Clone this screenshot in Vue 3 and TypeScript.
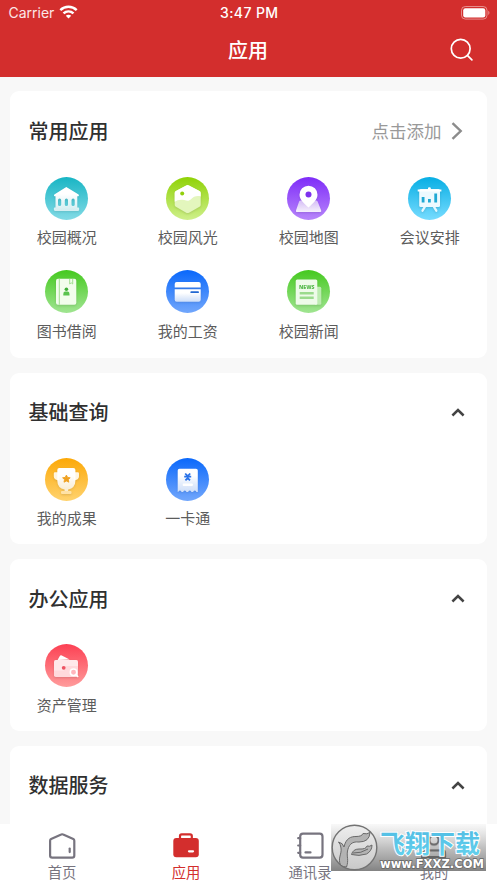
<script setup lang="ts">
interface AppItem {
  icon: string
  label: string
}

interface Section {
  title: string
  addable?: boolean
  items: AppItem[]
}

interface Tab {
  icon: string
  label: string
  active?: boolean
}

const sections: Section[] = [
  {
    title: '常用应用',
    addable: true,
    items: [
      { icon: 'campus', label: '校园概况' },
      { icon: 'scenery', label: '校园风光' },
      { icon: 'map', label: '校园地图' },
      { icon: 'meeting', label: '会议安排' },
      { icon: 'book', label: '图书借阅' },
      { icon: 'salary', label: '我的工资' },
      { icon: 'news', label: '校园新闻' },
    ],
  },
  {
    title: '基础查询',
    items: [
      { icon: 'trophy', label: '我的成果' },
      { icon: 'ticket', label: '一卡通' },
    ],
  },
  { title: '办公应用', items: [{ icon: 'asset', label: '资产管理' }] },
  { title: '数据服务', items: [] },
]

const tabs: Tab[] = [
  { icon: 'home', label: '首页' },
  { icon: 'apps', label: '应用', active: true },
  { icon: 'contacts', label: '通讯录' },
  { icon: 'me', label: '我的' },
]
</script>

<template>
  <div class="screen">
    <svg class="defs" width="0" height="0">
      <defs>
        <linearGradient id="fade" x1="0" y1="0" x2="0" y2="1">
          <stop offset="0.3" stop-color="#fff" />
          <stop offset="1" stop-color="#fff" stop-opacity="0.72" />
        </linearGradient>
        <linearGradient id="haze" x1="0" y1="0" x2="0" y2="1">
          <stop offset="0" stop-color="#fff" stop-opacity="0.6" />
          <stop offset="1" stop-color="#fff" stop-opacity="0.9" />
        </linearGradient>
      </defs>
    </svg>

    <header class="header">
      <div class="status">
        <div class="carrier">
          <span>Carrier</span>
          <svg width="19" height="14" viewBox="0 0 19 14" fill="none" stroke="#fff" stroke-width="2.5">
            <path d="M1.3 5.1C6 0.7 13 0.7 17.7 5.1" />
            <path d="M4.5 8.4c2.9-2.7 7.1-2.7 10 0" />
            <path d="M9.5 13.4L6.8 10.8c1.5-1.5 3.9-1.5 5.4 0z" fill="#fff" stroke="none" />
          </svg>
        </div>
        <div class="clock">3:47 PM</div>
        <div class="battery">
          <svg width="29" height="14" viewBox="0 0 29 14">
            <rect x="0.5" y="0.5" width="25.5" height="12.6" rx="3.8" fill="none" stroke="#fff" stroke-opacity="0.45" />
            <rect x="2.2" y="2.2" width="22.1" height="9.2" rx="2.2" fill="#fff" />
            <path d="M27.3 4.7v4.2c1.5-.6 1.5-3.6 0-4.2z" fill="#fff" fill-opacity="0.5" />
          </svg>
        </div>
      </div>
      <div class="navbar">
        <h1>应用</h1>
        <svg class="search" width="24" height="24" viewBox="0 0 24 24" fill="none" stroke="#fff" stroke-width="1.7" stroke-linecap="round">
          <circle cx="10.7" cy="10.8" r="9.4" />
          <path d="M17.6 17.6l4.3 4.2" />
        </svg>
      </div>
    </header>

    <main class="content">
      <section v-for="section in sections" :key="section.title" class="card">
        <div class="card-head">
          <h2>{{ section.title }}</h2>
          <div v-if="section.addable" class="add">
            <span>点击添加</span>
            <svg width="12" height="18" viewBox="0 0 12 18" fill="none" stroke="#8c8c8c" stroke-width="2.4">
              <path d="M1.5 1.2L9.7 9l-8.2 7.8" />
            </svg>
          </div>
          <svg v-else class="caret" width="14" height="9" viewBox="0 0 14 9" fill="none" stroke="#444" stroke-width="2.5">
            <path d="M1.4 7.5L7 2l5.6 5.5" />
          </svg>
        </div>
        <div v-if="section.items.length" class="grid">
          <div v-for="item in section.items" :key="item.label" class="item">
            <div class="disc" :class="item.icon">
              <svg width="43" height="43" viewBox="0 0 43 43">
                <g v-if="item.icon === 'campus'" fill="url(#fade)">
                  <path fill-rule="evenodd" d="M21.3 10L9.3 17.4Q8.3 19.3 10.5 19.3V30.6H9.8Q8.8 30.6 8.8 32t1 1.9H33.2Q34.2 33.9 34.2 32t-1-1.4H32.3V19.3Q34.6 19.3 33.6 17.4ZM13 23.2a1.6 1.6 0 0 1 3.2 0v4.2a1.6 1.6 0 0 1-3.2 0ZM19.8 23.2a1.6 1.6 0 0 1 3.2 0v4.2a1.6 1.6 0 0 1-3.2 0ZM26.5 23.2a1.6 1.6 0 0 1 3.2 0v4.2a1.6 1.6 0 0 1-3.2 0Z" />
                </g>
                <g v-else-if="item.icon === 'scenery'">
                  <path d="M20.2 8.5q1.4-.8 2.8 0l10.5 5.6q1.2.7 1.2 2v11.6q0 1.4-1.2 2L23 35.7q-1.4.8-2.8 0L9.9 29.7q-1.2-.7-1.2-2V16.1q0-1.3 1.2-2z" fill="#e3f6bd" />
                  <path d="M20.2 8.5q1.4-.8 2.8 0l10.5 5.6q1.2.7 1.2 2v3.3c-4-.8-7.2 0-10 3.2-2.6 2-4 1-6.5.4-4-.9-6.8.1-9.5 1.8V16.1q0-1.3 1.2-2z" fill="#fff" />
                  <circle cx="16.2" cy="16.5" r="2" fill="#91cf0b" />
                </g>
                <g v-else-if="item.icon === 'map'">
                  <path d="M13.5 23.5h15.7q1 0 1.4 1L34.2 33.5q.4 1.5-1 1.5H10q-1.5 0-1-1.5l3.1-9q.4-1 1.4-1z" fill="url(#haze)" />
                  <path d="M21.5 8.7a9 9 0 0 1 9 9c0 5.4-5.3 9.1-9 12.8c-3.7-3.7-9-7.4-9-12.8a9 9 0 0 1 9-9Z" fill="#fff" />
                  <circle cx="21.5" cy="17.6" r="3" fill="#7e31ee" />
                </g>
                <g v-else-if="item.icon === 'meeting'">
                  <path d="M16.8 29.8l-2.3 3.9M26 29.8l2.3 3.9" stroke="#e4f8ff" stroke-width="2.3" stroke-linecap="round" />
                  <rect x="11.2" y="12" width="20.8" height="18" rx="1.5" fill="#edfaff" />
                  <path d="M9.7 12.4H20V11q0-.8 1.4-.8t1.4.8v1.4h10.6v2.2H9.7z" fill="#fff" />
                  <path d="M15.1 20v5.5M21.4 22v3.5M27.7 16.5v9" stroke="#20a9d4" stroke-width="2.8" />
                </g>
                <g v-else-if="item.icon === 'book'">
                  <rect x="11" y="8.7" width="20.3" height="26" rx="2" fill="#f2fdec" />
                  <path d="M14.3 8.7v26" stroke="#9add88" stroke-width="0.9" />
                  <path d="M24.7 9v5l1.5-1.2 1.5 1.2V9" fill="none" stroke="#9add88" stroke-width="0.9" />
                  <circle cx="21.4" cy="19.3" r="1.8" fill="#3fae37" />
                  <path d="M18.3 25.6v-1.7q0-2.3 2-2.3h2.2q2 0 2 2.3v1.7z" fill="#5ac34e" />
                </g>
                <g v-else-if="item.icon === 'salary'">
                  <path d="M8.7 17.5V14q0-2 2-2h22q2 0 2 2v3.5z" fill="#fff" />
                  <path d="M8.7 19.2h26V29.8q0 2-2 2h-22q-2 0-2-2z" fill="url(#fade)" />
                  <path d="M25.2 22.2h6.9" stroke="#2167d2" stroke-width="1.7" stroke-linecap="round" />
                </g>
                <g v-else-if="item.icon === 'news'">
                  <path d="M30 16.7h2.8q1.5 0 1.5 1.5v15q0 1.5-1.5 1.5H28z" fill="#bcecb0" />
                  <rect x="8.7" y="9.4" width="21.6" height="25.3" rx="1.5" fill="#eefbe9" />
                  <text x="12" y="18.9" textLength="15.5" lengthAdjust="spacingAndGlyphs" class="news-text">NEWS</text>
                  <path d="M12.7 23.3h14M12.7 27.7h14" stroke="#9bdb8d" stroke-width="2.5" />
                </g>
                <g v-else-if="item.icon === 'trophy'">
                  <path d="M13 14.2H10q-1.2 0-1.2 1.2v3q0 3.5 5.5 4M29.8 14.2h3q1.2 0 1.2 1.2v3q0 3.5-5.5 4" fill="#fff5df" />
                  <path d="M12.3 12q0-2 2-2h14.1q2 0 2 2v10.5q0 7.5-7.3 9v2.5h-3.5v-2.5q-7.3-1.5-7.3-9z" fill="url(#fade)" />
                  <rect x="16" y="33" width="10.5" height="3" rx="1" fill="#ffe2a5" />
                  <path d="M21.4 17.1l1.2 2.3 2.6.4-1.9 1.8.5 2.6-2.4-1.2-2.4 1.2.5-2.6-1.9-1.8 2.6-.4z" fill="#efa122" stroke="#efa122" stroke-width="0.9" stroke-linejoin="round" />
                </g>
                <g v-else-if="item.icon === 'ticket'">
                  <path d="M11.7 12.5q0-1.8 1.8-1.8h16.5q1.8 0 1.8 1.8V34h-1.4a1.6 1.6 0 0 0-3.2 0h-1.8a1.6 1.6 0 0 0-3.2 0h-1.8a1.6 1.6 0 0 0-3.2 0h-1.7a1.6 1.6 0 0 0-3.2 0h-.6z" fill="url(#fade)" />
                  <path d="M19.2 15.5l2.5 2.6 2.5-2.6M18.2 18.6h7M19.4 22.3l2.3-2.3 2.3 2.3M21.7 18v3" fill="none" stroke="#2a73e8" stroke-width="1.8" />
                  <rect x="16.7" y="25.5" width="10.2" height="2.6" rx="1" fill="#fff" />
                </g>
                <g v-else>
                  <path d="M12.6 16l2.2-4q.7-1.2 2-.6l7.8 4.1z" fill="#fff" />
                  <rect x="9" y="16.1" width="24" height="17" rx="1.8" fill="#ffd9dc" />
                  <path d="M10.8 16.1h20.4q1.8 0 1.8 1.8v4.2H19V26.5H9V17.9q0-1.8 1.8-1.8z" fill="#fff" fill-opacity="0.4" />
                  <circle cx="18.7" cy="23.8" r="1.9" fill="#ee5363" />
                  <circle cx="28.5" cy="28.3" r="3.2" fill="#ffb6bc" stroke="#fff" stroke-width="1.5" />
                  <path d="M31 31l2.2 1.8" stroke="#fff" stroke-width="1.5" />
                </g>
              </svg>
            </div>
            <span class="label">{{ item.label }}</span>
          </div>
        </div>
      </section>
    </main>

    <nav class="tabbar">
      <div v-for="tab in tabs" :key="tab.label" class="tab" :class="{ active: tab.active }">
        <svg width="28" height="28" viewBox="0 0 28 28" fill="none" stroke="currentColor" stroke-width="2.2" stroke-linejoin="round" stroke-linecap="round">
          <g v-if="tab.icon === 'home'">
            <path d="M13.2 2.5Q14.2 2 15.2 2.5L25.3 7Q26.3 7.5 26.3 8.7V23.5Q26.3 25.6 24.2 25.6H4.2Q2.1 25.6 2.1 23.5V8.7Q2.1 7.5 3.1 7z" />
            <path d="M21.7 16.5v3.6" />
          </g>
          <g v-else-if="tab.icon === 'apps'">
            <rect x="1.3" y="6" width="25.5" height="19.3" rx="3" fill="currentColor" stroke="none" />
            <path d="M8 7V4q0-1.7 1.7-1.7h8.4Q19.8 2.3 19.8 4v3" />
            <path d="M17 19.3h4" stroke="#fff" />
          </g>
          <g v-else-if="tab.icon === 'contacts'">
            <rect x="4.2" y="1.6" width="22.3" height="24" rx="2.8" />
            <path d="M2.2 6.2h2M2.2 13.5h2M2.2 20.8h2" />
            <path d="M9.5 20.4h5" />
          </g>
          <g v-else>
            <circle cx="14" cy="8" r="5.2" />
            <path d="M2.5 25v-2.5q0-4.3 4.3-4.3h14.4q4.3 0 4.3 4.3V25z" />
          </g>
        </svg>
        <span>{{ tab.label }}</span>
      </div>
    </nav>

    <div class="watermark">
      <svg width="155" height="47" viewBox="0 0 155 47">
        <defs>
          <linearGradient id="plate" x1="0" y1="0" x2="0" y2="1">
            <stop offset="0" stop-color="#f5f5f5" stop-opacity="0.65" />
            <stop offset="0.5" stop-color="#b5b5b5" stop-opacity="0.85" />
            <stop offset="1" stop-color="#757575" stop-opacity="0.9" />
          </linearGradient>
          <linearGradient id="coin" x1="0" y1="0" x2="0" y2="1">
            <stop offset="0" stop-color="#eee" />
            <stop offset="1" stop-color="#c8c8c8" />
          </linearGradient>
          <linearGradient id="sky" x1="0" y1="0" x2="0" y2="1">
            <stop offset="0" stop-color="#4fb9e2" />
            <stop offset="1" stop-color="#65d3ee" />
          </linearGradient>
        </defs>
        <rect width="155" height="47" fill="url(#plate)" />
        <g fill="none" stroke="#505050" stroke-opacity="0.7" stroke-width="2">
          <circle cx="103" cy="16" r="4.5" />
          <path d="M91 33v-4.5q0-2 2-2h19q2 0 2 2V33z" />
        </g>
        <circle cx="23.5" cy="23.5" r="22.3" fill="url(#coin)" stroke="#737373" stroke-width="1.4" />
        <g fill="#b3b3b3" stroke="#696969" stroke-width="1" stroke-linejoin="round">
          <path d="M9.5 41C6.5 34 11 30 10 24Q9.5 20 7.5 18Q12 19 13 23C15 14 20 12.5 25 12.5Q31 12.5 32 9.5Q36 10.5 39 8.5Q38.5 18 28 18C20 17 17.5 22 16.5 27C15.5 33 18 36 15.5 43Q12 43 9.5 41Z" />
          <path d="M20.5 30.5Q22 25 28 25Q35 25.5 36 22Q38.5 23 41 21Q41 27 35.5 30Q28 32.5 20.5 30.5Z" />
          <path d="M22 29Q30 29.5 37 25" fill="none" />
        </g>
        <text class="mark-name" x="49" y="29" textLength="100" lengthAdjust="spacingAndGlyphs">飞翔下载</text>
        <text class="mark-url" x="49" y="43.7" textLength="104" lengthAdjust="spacingAndGlyphs">www.FXXZ.COM</text>
      </svg>
    </div>
  </div>
</template>

<style>
body {
  background: #f8f8f8;
  overflow: hidden;
}
</style>

<style scoped>
.screen {
  position: relative;
  display: flex;
  flex-direction: column;
  height: 883px;
  overflow: hidden;
  background: #f8f8f8;
  font-family: Inter, "Noto Sans CJK SC", sans-serif;
}

.defs {
  position: absolute;
}

.header {
  flex: none;
  height: 77px;
  background: #d32e2d;
  color: #fff;
}

.status {
  display: grid;
  grid-template-columns: 1fr auto 1fr;
  align-items: center;
  height: 25px;
  padding: 0 7px 0 8.5px;
  font-size: 14px;
}

.carrier {
  display: flex;
  align-items: center;
  gap: 5px;
  color: #fbe7e7;
}

.carrier svg {
  margin-top: -2px;
}

.clock {
  font-weight: 500;
  letter-spacing: 0.4px;
}

.battery {
  display: flex;
  justify-content: flex-end;
}

.navbar {
  display: grid;
  grid-template-columns: 1fr auto 1fr;
  align-items: center;
  height: 50px;
  padding: 0 23px 0 22px;
}

h1 {
  grid-column: 2;
  margin: 0;
  font: 500 20px/30px "Noto Sans CJK SC", sans-serif;
}

.search {
  justify-self: end;
}

.content {
  flex: 1;
  min-height: 0;
  display: flex;
  flex-direction: column;
  gap: 15px;
  padding: 14.4px 10px 0;
  overflow: hidden;
}

.card {
  flex: none;
  padding-bottom: 16.1px;
  border-radius: 9px;
  background: #fff;
}

.card:first-child {
  padding-bottom: 16.9px;
}

.card-head {
  display: flex;
  align-items: center;
  justify-content: space-between;
  height: 79px;
  padding: 0 24px 0 18.5px;
}

h2 {
  margin: 0;
  color: #303030;
  font: 500 20px/30px "Noto Sans CJK SC", sans-serif;
}

.add {
  display: flex;
  align-items: center;
  gap: 9.5px;
  color: #999;
  font: 17.5px/26px "Noto Sans CJK SC", sans-serif;
}

.caret {
  margin-right: -2px;
}

.grid {
  display: grid;
  grid-template-columns: repeat(4, 1fr);
  row-gap: 23.5px;
  margin: 0 -3.2px 0 -3.6px;
  padding-top: 6.2px;
}

.item {
  display: flex;
  flex-direction: column;
  align-items: center;
}

.disc {
  width: 43px;
  height: 43px;
  border-radius: 50%;
}

.disc svg {
  display: block;
  filter: drop-shadow(0 1px 1px rgba(0, 0, 0, 0.12));
}

.campus { background: linear-gradient(#18b5c4, #83dbe6); }
.scenery { background: linear-gradient(#8fd205, #cff08c); }
.map { background: linear-gradient(#7e2cf8, #b886fb); }
.meeting { background: linear-gradient(#07aee4, #77dcff); }
.book,
.news { background: linear-gradient(#45c91f, #a1e592); }
.salary,
.ticket { background: linear-gradient(#0a68fb, #72a7fc); }
.trophy { background: linear-gradient(#fca807, #ffd36f); }
.asset { background: linear-gradient(#fc4053, #ff9c9c); }

.news-text {
  fill: #55b94b;
  font: 800 5.5px "Open Sans", sans-serif;
}

.label {
  margin-top: 6.3px;
  color: #5c5c5c;
  font: 15px/21px "Noto Sans CJK SC", sans-serif;
}

.tabbar {
  flex: none;
  display: grid;
  grid-template-columns: repeat(4, 124px);
  height: 59px;
  background: #fff;
}

.tab {
  display: flex;
  flex-direction: column;
  align-items: center;
  padding-top: 8px;
  color: #77747f;
  font: 14.3px/20px "Noto Sans CJK SC", sans-serif;
}

.tab span {
  margin-top: 2px;
}

.tab.active {
  color: #d32e2d;
}

.watermark {
  position: absolute;
  left: 331px;
  top: 824px;
  width: 155px;
  height: 47px;
}

.mark-name {
  fill: url(#sky);
  stroke: #fff;
  stroke-width: 2px;
  paint-order: stroke;
  font: 700 25.5px "Noto Sans CJK SC", sans-serif;
}

.mark-url {
  fill: #fff;
  stroke: #666;
  stroke-width: 1.5px;
  paint-order: stroke;
  font: 700 12px "DejaVu Sans", sans-serif;
}
</style>
